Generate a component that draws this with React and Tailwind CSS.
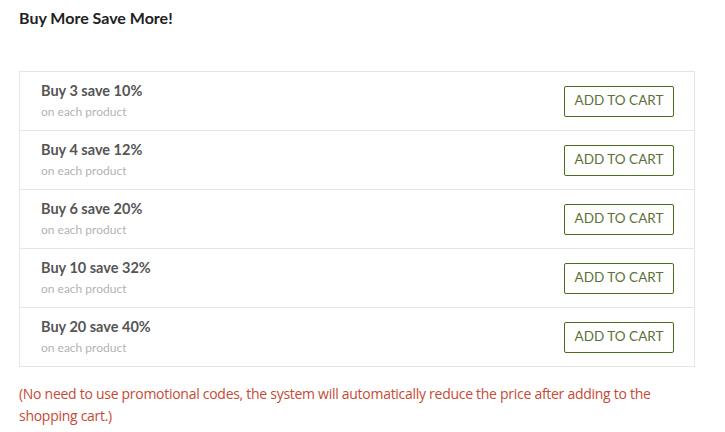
export default function App() {
  const rows = [
    ["Buy 3 save 10%"],
    ["Buy 4 save 12%"],
    ["Buy 6 save 20%"],
    ["Buy 10 save 32%"],
    ["Buy 20 save 40%"],
  ];
  return (
    <div className="w-[725px] h-[432px] bg-white px-[19px] pt-[7px]" style={{ fontFamily: "Lato, 'Open Sans', sans-serif" }}>
      <h2 className="text-[16px] font-bold text-[#222] leading-[20px] pt-[1px]">Buy More Save More!</h2>
      <div className="mt-[43px] w-[676px] border border-[#e6e6e6]">
        {rows.map(([t], i) => (
          <div key={i} className={`flex items-center justify-between pl-[21px] pr-[20px] ${i < rows.length - 1 ? "h-[59px] border-b border-[#e6e6e6]" : "h-[58px]"}`}>
            <div className="flex flex-col pb-[1px]">
              <span className="text-[14.5px] font-bold text-[#555] leading-[18px]">{t}</span>
              <span className="text-[12px] text-[#b3b3b3] leading-[14px] mt-[5px]">on each product</span>
            </div>
            <button className="w-[110px] h-[31px] border border-[#4b6b1e] rounded-[2px] text-[13.5px] text-[#5b7236] leading-none">ADD TO CART</button>
          </div>
        ))}
      </div>
      <p className="mt-[16px] text-[14px] leading-[22px] text-[#c64a34] w-[660px]" style={{ fontFamily: "'Open Sans', sans-serif", letterSpacing: "-0.28px" }}>
        (No need to use promotional codes, the system will automatically reduce the price after adding to the shopping cart.)
      </p>
    </div>
  );
}
